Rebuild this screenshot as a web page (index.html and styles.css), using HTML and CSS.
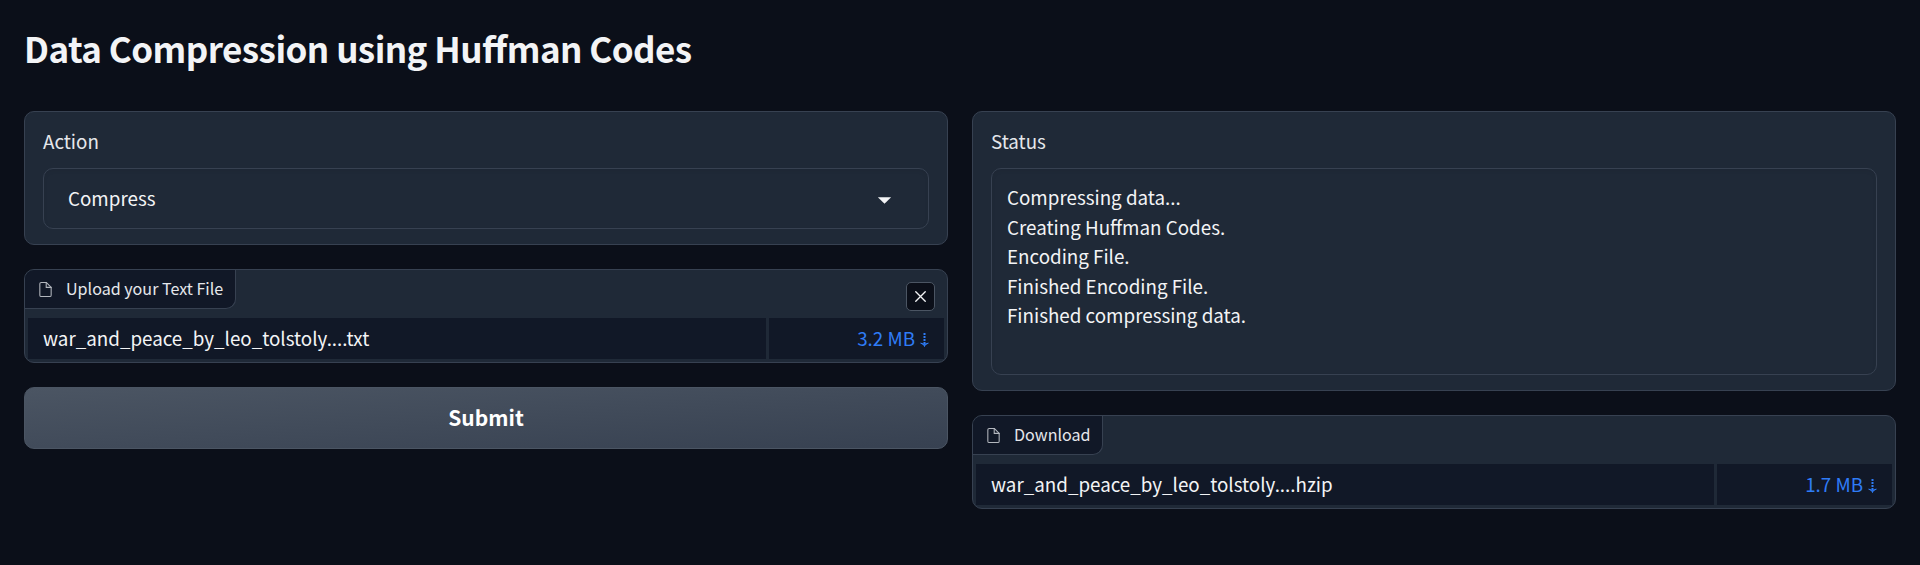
FILE: index.html
```html
<!DOCTYPE html>
<html lang="en">
<head>
<meta charset="utf-8">
<title>Data Compression using Huffman Codes</title>
<link rel="stylesheet" href="styles.css">
</head>
<body>
<main class="app">
  <h1 class="title">Data Compression using Huffman Codes</h1>
  <div class="columns">
    <section class="column">
      <div class="block field">
        <span class="field-label">Action</span>
        <div class="input select">
          <span>Compress</span>
          <svg class="caret" width="23" height="23" viewBox="0 0 18 18"><path d="M3.800 8l5.200 5.200 5.200-5.200z" fill="currentColor"/></svg>
        </div>
      </div>
      <div class="block file">
        <div class="file-head">
          <div class="tag">
            <svg width="17" height="17" viewBox="0 0 24 24" fill="none" stroke="currentColor" stroke-width="1.5" stroke-linecap="round" stroke-linejoin="round"><path d="M13 2H6a2 2 0 0 0-2 2v16a2 2 0 0 0 2 2h12a2 2 0 0 0 2-2V9z"/><path d="M13 2v7h7"/></svg>
            <span>Upload your Text File</span>
          </div>
          <button class="close" aria-label="Clear"><svg width="19" height="19" viewBox="0 0 24 24" stroke="currentColor" stroke-width="1.7" stroke-linecap="round"><path d="M18 6L6 18M6 6l12 12"/></svg></button>
        </div>
        <div class="row">
          <div class="cell name"><span>war_and_peace_by_leo_tolstoly....txt</span></div>
          <div class="cell size"><span>3.2 MB</span><svg class="arrow" width="9" height="15" viewBox="0 0 9 15"><path d="M4.500 0v12" stroke="currentColor" stroke-width="2" stroke-dasharray="2 1"/><path d="M.7 10.200c2 .2 3 1.300 3.800 3.300.8-2 1.800-3.100 3.800-3.300-1.500 1.300-6.100 1.300-7.600 0z" fill="currentColor" stroke="currentColor"/></svg></div>
        </div>
      </div>
      <button class="submit"><span>Submit</span></button>
    </section>
    <section class="column">
      <div class="block field status">
        <span class="field-label">Status</span>
        <div class="input output">Compressing data...<br>Creating Huffman Codes.<br>Encoding File.<br>Finished Encoding File.<br>Finished compressing data.</div>
      </div>
      <div class="block file">
        <div class="file-head">
          <div class="tag">
            <svg width="17" height="17" viewBox="0 0 24 24" fill="none" stroke="currentColor" stroke-width="1.5" stroke-linecap="round" stroke-linejoin="round"><path d="M13 2H6a2 2 0 0 0-2 2v16a2 2 0 0 0 2 2h12a2 2 0 0 0 2-2V9z"/><path d="M13 2v7h7"/></svg>
            <span>Download</span>
          </div>
        </div>
        <div class="row">
          <div class="cell name"><span>war_and_peace_by_leo_tolstoly....hzip</span></div>
          <div class="cell size"><span>1.7 MB</span><svg class="arrow" width="9" height="15" viewBox="0 0 9 15"><path d="M4.500 0v12" stroke="currentColor" stroke-width="2" stroke-dasharray="2 1"/><path d="M.7 10.200c2 .2 3 1.300 3.800 3.300.8-2 1.800-3.100 3.800-3.300-1.500 1.300-6.100 1.300-7.600 0z" fill="currentColor" stroke="currentColor"/></svg></div>
        </div>
      </div>
    </section>
  </div>
</main>
</body>
</html>
```
FILE: styles.css
```css
* { box-sizing: border-box; }
body {
  margin: 0;
  min-height: 565px;
  background: #0b0f19;
  color: #f3f4f6;
  font-family: "Noto Sans CJK SC", "Open Sans", sans-serif;
  font-size: 18.8px;
}
button { font: inherit; color: inherit; padding: 0; }
.app { padding: 23px 24px 24px; }
.title { margin: 0 0 38px; height: 50px; line-height: 50px; font-size: 35px; font-weight: 700; letter-spacing: -.55px; font-feature-settings: "liga"; white-space: nowrap; }
.columns { display: grid; grid-template-columns: 1fr 1fr; gap: 24px; }
.column { display: flex; flex-direction: column; gap: 24px; }
.block { border: 1px solid #374151; border-radius: 10px; background: #1f2937; overflow: hidden; }
.field { height: 134px; padding: 13px 18px; }
.field-label { display: block; height: 31px; line-height: 31px; margin-bottom: 12px; color: #e5e7eb; }
.input { border: 1px solid #374151; border-radius: 10px; box-shadow: inset 0 2px 4px rgba(0, 0, 0, .05); }
.select { display: flex; align-items: center; justify-content: space-between; height: 61px; padding: 0 32px 0 24px; }
.select span, .tag span, .cell span, .submit span { padding-bottom: 2px; }
.status { height: 280px; }
.output { height: 207px; padding: 13px 15px; line-height: 29.5px; }
.file { height: 94px; }
.file-head { display: flex; justify-content: space-between; height: 48px; }
.tag {
  display: flex; align-items: center; gap: 12px; height: 39px; padding: 0 11.5px 0 12px;
  border: solid #374151; border-width: 0 1px 1px 0; border-radius: 0 0 10px 0;
  background: #111827; color: #e5e7eb; font-size: 16.100px;
}
.tag svg { color: #b3b7be; }
.close {
  display: flex; align-items: center; justify-content: center; width: 29px; height: 29px; margin: 12px 12px 0 0;
  border: 1px solid #4b5563; border-radius: 5px; background: #0b0f19;
}
.row { display: grid; grid-template-columns: 1fr 175px; gap: 3px; height: 41px; margin: 0 3px; }
.cell { display: flex; align-items: center; padding: 0 15px; background: #111827; }
.size { justify-content: flex-end; gap: 5px; color: #2f7cf6; }
.arrow { margin-top: 3px; }
.submit {
  display: flex; align-items: center; justify-content: center;
  height: 62px; border: 1px solid #4b5563; border-radius: 10px;
  background: linear-gradient(to bottom right, #4b5563, #374151); color: #fff; font-size: 21px; font-weight: 700;
}
```
